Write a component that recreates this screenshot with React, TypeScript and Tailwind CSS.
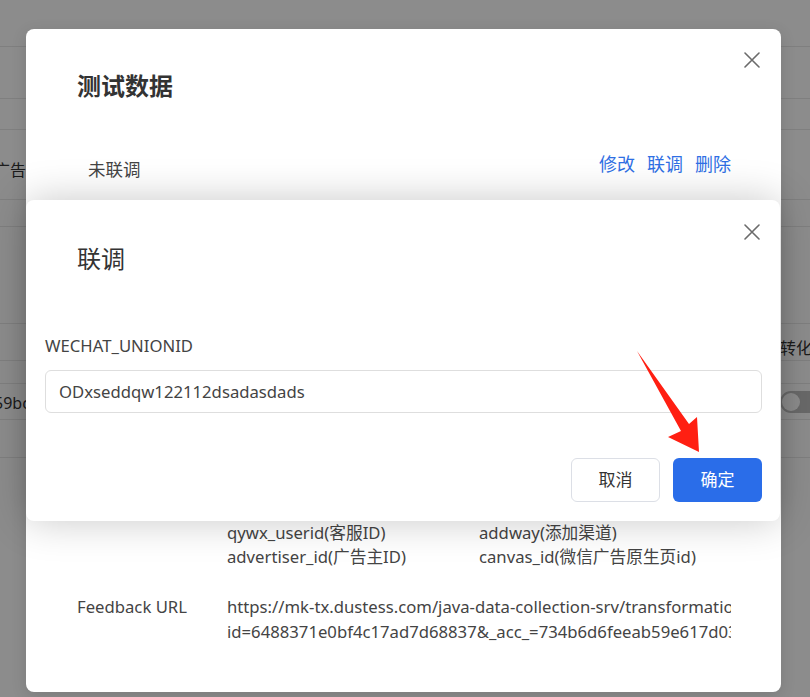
import React from "react";

const font = { fontFamily: '"Noto Sans", "Noto Sans CJK SC", sans-serif' };

function CloseIcon() {
  return (
    <svg width="16" height="16" viewBox="0 0 16 16" fill="none">
      <path d="M1 1L15 15M15 1L1 15" stroke="#6b6b6b" strokeWidth="1.6" strokeLinecap="round" />
    </svg>
  );
}

function BackgroundPage() {
  const rows = [
    { h: 47, left: "", right: "", lo: "", ro: "" },
    { h: 52, left: "", right: "", lo: "", ro: "" },
    { h: 31, left: "", right: "", lo: "", ro: "" },
    { h: 70, left: "广告", right: "", lo: "mt-[10px]", ro: "" },
    { h: 27, left: "", right: "", lo: "", ro: "" },
    { h: 97, left: "", right: "", lo: "", ro: "" },
    { h: 37, left: "", right: "转化率", lo: "", ro: "mt-[12px]" },
    { h: 23, left: "", right: "", lo: "", ro: "" },
    { h: 36, left: "59bc", right: "toggle", lo: "mt-[3px]", ro: "" },
    { h: 38, left: "", right: "", lo: "", ro: "" },
  ];
  return (
    <div className="flex flex-col bg-white w-[810px] h-[697px] text-[16px] text-[#333]">
      {rows.map((r, i) => (
        <div
          key={i}
          className="flex items-center justify-between border-b border-[#e8e8e8] shrink-0"
          style={{ height: r.h }}
        >
          <span className={"-ml-[6px] whitespace-nowrap " + r.lo}>{r.left}</span>
          {r.right === "toggle" ? (
            <span className="mr-[-14px] w-[44px] h-[22px] rounded-full bg-[#bfbfbf] flex items-center pl-[2px]">
              <span className="w-[18px] h-[18px] rounded-full bg-white" />
            </span>
          ) : (
            <span className={"mr-[-18px] whitespace-nowrap " + r.ro}>{r.right}</span>
          )}
        </div>
      ))}
    </div>
  );
}

function Arrow() {
  return (
    <svg
      className="absolute left-0 top-0 pointer-events-none"
      width="810"
      height="697"
      viewBox="0 0 810 697"
    >
      <polygon
        points="637,351 689,424 697,417 699,452 668,437 681,431"
        fill="#ff1f12"
      />
    </svg>
  );
}

export default function App() {
  return (
    <div className="relative w-[810px] h-[697px] overflow-hidden" style={font}>
      <BackgroundPage />
      <div className="absolute inset-0 bg-black/45" />

      {/* Modal 1 */}
      <div className="absolute left-[26px] top-[29px] w-[755px] h-[663px] bg-white rounded-[8px] shadow-[0_4px_16px_rgba(0,0,0,0.12)] flex flex-col">
        <button className="absolute right-[21px] top-[23px] w-[16px] h-[16px] flex items-center justify-center">
          <CloseIcon />
        </button>
        <div className="pl-[51px] pt-[42px] text-[24px] leading-[30px] font-bold text-[#333]">测试数据</div>
        <div className="flex items-start justify-between pl-[62px] pr-[50px] mt-[56px] h-[24px]">
          <span className="text-[17.5px] leading-[24px] text-[#444]">未联调</span>
          <div className="flex gap-[12px] text-[18px] leading-[24px] text-[#2f6fe4] -mt-[5px]">
            <span>修改</span>
            <span>联调</span>
            <span>删除</span>
          </div>
        </div>
        <div className="h-[340px] shrink-0" />
        <div className="flex pl-[51px] text-[16.7px] leading-[24px] text-[#444]">
          <div className="w-[150px] shrink-0" />
          <div className="flex flex-col w-[252px] shrink-0">
            <span>qywx_userid(客服ID)</span>
            <span>advertiser_id(广告主ID)</span>
          </div>
          <div className="flex flex-col">
            <span>addway(添加渠道)</span>
            <span>canvas_id(微信广告原生页id)</span>
          </div>
        </div>
        <div className="flex pl-[51px] mt-[25px] text-[16.7px] leading-[25px] text-[#444]">
          <div className="w-[150px] shrink-0">Feedback URL</div>
          <div className="w-[504px] overflow-hidden flex flex-col">
            <span className="whitespace-nowrap">https://mk-tx.dustess.com/java-data-collection-srv/transformation?</span>
            <span className="whitespace-nowrap">id=6488371e0bf4c17ad7d68837&amp;_acc_=734b6d6feeab59e617d03a9c</span>
          </div>
        </div>
      </div>

      {/* Modal 2 */}
      <div className="absolute left-[26px] top-[200px] w-[754px] h-[321px] bg-white rounded-[8px] shadow-[0_0_40px_rgba(0,0,0,0.22)] flex flex-col">
        <button className="absolute right-[20px] top-[24px] w-[16px] h-[16px] flex items-center justify-center">
          <CloseIcon />
        </button>
        <div className="pl-[51px] pt-[44px] text-[24px] leading-[30px] text-[#333]">联调</div>
        <div className="pl-[19px] pr-[18px] mt-[60px] flex flex-col">
          <label className="text-[16.7px] leading-[24px] text-[#444]">WECHAT_UNIONID</label>
          <div className="mt-[12px] h-[43px] border border-[#dedede] rounded-[6px] flex items-center px-[13px] text-[16.7px] text-[#444]">
            ODxseddqw122112dsadasdads
          </div>
          <div className="mt-[45px] flex justify-end gap-[13px]">
            <button className="w-[89px] h-[44px] rounded-[6px] border border-[#dcdfe6] bg-white text-[17px] text-[#333]">取消</button>
            <button className="w-[89px] h-[44px] rounded-[6px] bg-[#2a6de9] text-[17px] text-white">确定</button>
          </div>
        </div>
      </div>

      <Arrow />
    </div>
  );
}
